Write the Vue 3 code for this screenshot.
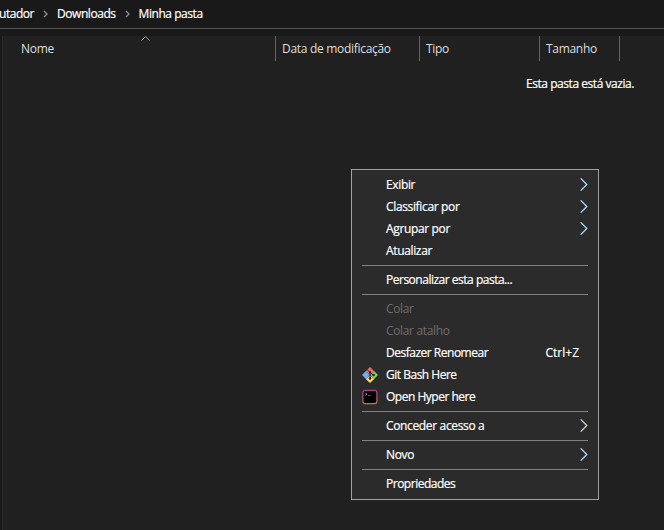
<script setup>
const crumbs = ['utador', 'Downloads', 'Minha pasta']
const columns = [
  { label: 'Nome', cls: 'name' },
  { label: 'Data de modificação', cls: 'date' },
  { label: 'Tipo', cls: 'type' },
  { label: 'Tamanho', cls: 'size' },
]
const groups = [
  [
    { label: 'Exibir', sub: true },
    { label: 'Classificar por', sub: true },
    { label: 'Agrupar por', sub: true },
    { label: 'Atualizar' },
  ],
  [{ label: 'Personalizar esta pasta...', tight: true }],
  [
    { label: 'Colar', disabled: true },
    { label: 'Colar atalho', disabled: true },
    { label: 'Desfazer Renomear', shortcut: 'Ctrl+Z', tight: true },
    { label: 'Git Bash Here', icon: 'git', tight: true },
    { label: 'Open Hyper here', icon: 'hyper', tight: true },
  ],
  [{ label: 'Conceder acesso a', sub: true }],
  [{ label: 'Novo', sub: true }],
  [{ label: 'Propriedades', tight: true }],
]
</script>

<template>
  <div class="window">
    <nav class="address">
      <template v-for="(c, i) in crumbs" :key="c">
        <svg v-if="i" class="sep" width="5" height="8" viewBox="0 0 5 8"><path d="M1 1l3 3-3 3" /></svg>
        <span>{{ c }}</span>
      </template>
    </nav>
    <main class="pane">
      <header class="columns">
        <div v-for="c in columns" :key="c.label" class="col" :class="c.cls">
          {{ c.label }}
          <svg v-if="c.cls === 'name'" class="sort" width="9" height="5" viewBox="0 0 9 5"><path d="M.5 4.5l4-4 4 4" /></svg>
        </div>
      </header>
      <p class="empty">Esta pasta está vazia.</p>
    </main>

    <div class="menu">
      <div v-for="(g, gi) in groups" :key="gi" class="group">
        <div v-for="it in g" :key="it.label" class="item" :class="{ disabled: it.disabled, tight: it.tight }">
          <span class="icon">
            <svg v-if="it.icon === 'git'" width="16" height="16" viewBox="0 0 16 16">
              <path d="M8 0l4.2 4.2L8 7.6 3.8 4.2z" fill="#f2696c" />
              <path d="M3.9 3.9L7.7 8l-3.8 4.1L0 8z" fill="#74a9f5" />
              <path d="M12.1 3.9L16 8l-3.9 4.1L8.3 8z" fill="#80cf64" />
              <path d="M8 8.4l4.2 3.6L8 16l-4.2-4z" fill="#fbe06f" />
              <path d="M5 2.4l2.8 2.8 3.4 2.8M8 5v7" fill="none" stroke="#262626" stroke-width="1" />
              <circle cx="8" cy="5.2" r="1.1" fill="#262626" />
              <circle cx="11.6" cy="8" r="1.3" fill="#262626" />
              <circle cx="8" cy="11.4" r="1.3" fill="#262626" />
            </svg>
            <svg v-else-if="it.icon === 'hyper'" width="16" height="16" viewBox="0 0 16 16">
              <defs>
                <linearGradient id="hyper-edge" x1="0" y1="0" x2="0" y2="1">
                  <stop offset="0" stop-color="#b13a92" />
                  <stop offset="1" stop-color="#bd7c3c" />
                </linearGradient>
              </defs>
              <rect x=".9" y="1.4" width="14" height="13.2" rx="2.4" fill="#000" stroke="url(#hyper-edge)" stroke-width="1.2" />
              <path d="M3.6 4.2l1.3 1-1 1.2" fill="none" stroke="#ddd" stroke-width=".9" />
              <path d="M6 6.5h2.6" stroke="#777" stroke-width=".8" />
            </svg>
          </span>
          <span class="label">{{ it.label }}</span>
          <span v-if="it.shortcut" class="shortcut">{{ it.shortcut }}</span>
          <svg v-if="it.sub" class="arrow" width="8" height="13" viewBox="0 0 8 13">
            <path class="fringe" d="M1.5 .3l6 6.2-6 6.2" /><path class="core" d="M.6 .4l6.1 6.1-6.1 6.1" />
          </svg>
        </div>
      </div>
    </div>
  </div>
</template>

<style>
body { background: #191919; overflow: hidden; }
</style>
<style scoped>
.window {
  position: relative;
  width: 664px;
  height: 530px;
  box-sizing: border-box;
  overflow: hidden;
  background: #191919;
  color: #fff;
  font: 12px/16px "Open Sans", "Noto Sans", sans-serif;
  letter-spacing: -0.35px;
  -webkit-text-stroke: .2px;
  white-space: nowrap;
}
svg { display: block; flex: none; }
.address { display: flex; align-items: center; height: 28px; border-bottom: 1px solid #535553; letter-spacing: -0.45px; }
.address span:first-child { margin-left: -1px; }
.sep { margin: 0 9px; }
.sep path { fill: none; stroke: #8b8b8b; stroke-width: 1.4; }
.pane { margin: 7px 0 0 2px; height: 494px; background: #202020; border-left: 1px solid #2b2b2b; }
.columns { display: flex; height: 25px; color: #dedede; letter-spacing: -0.3px; -webkit-text-stroke: 0; }
.col { position: relative; box-sizing: border-box; padding: 5px 0 0 6px; border-right: 1px solid #636363; }
.name { width: 273px; padding-left: 18px; }
.date { width: 144px; }
.type { width: 120px; }
.size { width: 80px; }
.sort { position: absolute; left: 138px; top: 0; }
.sort path { fill: none; stroke: #a0a0a0; }
.empty { margin: 15px 0 0 523px; letter-spacing: -0.45px; }
.menu {
  position: absolute;
  left: 351px;
  top: 169px;
  width: 248px;
  box-sizing: border-box;
  padding: 4px 10px;
  background: #2b2b2b;
  border: 1px solid #a0a0a0;
}
.group + .group::before { content: ""; display: block; height: 1px; margin: 3px 0; background: #808080; }
.item { display: flex; align-items: center; height: 22px; }
.tight .label { letter-spacing: -0.49px; }
.disabled { color: #6d6d6d; -webkit-text-stroke: 0; }
.icon { width: 16px; margin-right: 8px; }
.label { flex: 1; }
.shortcut { margin-right: 9px; letter-spacing: 0; }
.arrow { margin-bottom: 1px; }
.arrow path { fill: none; }
.fringe { stroke: #b9763c; stroke-width: .9; }
.core { stroke: #a5dcff; stroke-width: 1.1; }
</style>
